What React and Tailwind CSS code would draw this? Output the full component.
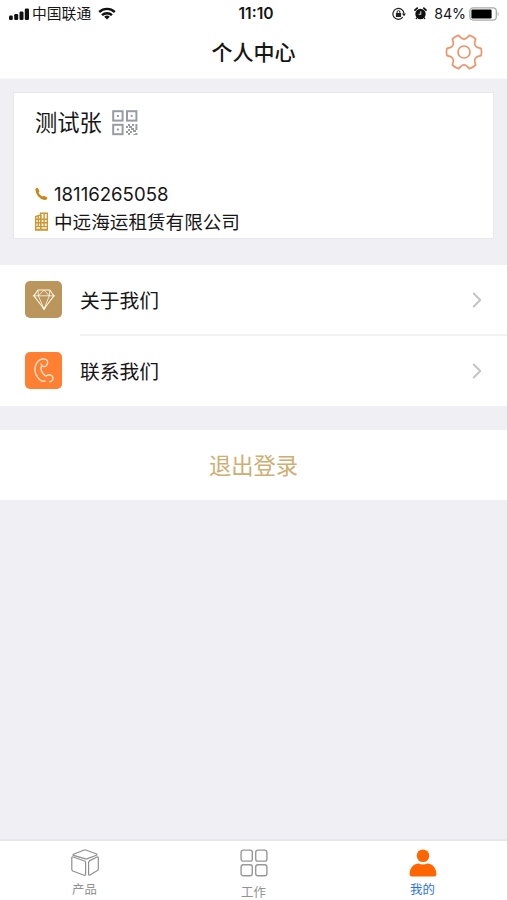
import { ChevronRight } from 'lucide-react'

function SignalIcon() {
  return (
    <svg width="21" height="12" viewBox="0 0 21 12" fill="#111">
      <rect x="0" y="7.5" width="3.8" height="4.5" rx="1.2" />
      <rect x="5.2" y="6" width="4" height="6" rx="1.2" />
      <rect x="10.5" y="3.5" width="4" height="8.5" rx="1.2" />
      <rect x="15.8" y="0.5" width="4.2" height="11.5" rx="1.2" />
    </svg>
  )
}

function WifiIcon() {
  return (
    <svg width="18" height="13" viewBox="0 0 18 13" fill="none" stroke="#111" strokeWidth="2.4">
      <path d="M1.2 5 A11.4 11.4 0 0 1 16.8 5" />
      <path d="M4 8.2 A7.3 7.3 0 0 1 14 8.2" />
      <path d="M6.2 9.7 A4.1 4.1 0 0 1 11.8 9.7 L9 12.5 Z" fill="#111" stroke="none" />
    </svg>
  )
}

function RotationLockIcon() {
  return (
    <svg width="14" height="14" viewBox="0 0 14 14" fill="none" stroke="#222" strokeWidth="1.2">
      <path d="M10.8 10.2 A5.5 5.5 0 1 1 11.9 6.5" />
      <path d="M9.9 6.5 H14 L12 9.2 Z" fill="#222" stroke="none" />
      <rect x="3.9" y="6" width="5.2" height="3.9" rx="0.5" fill="#222" stroke="none" />
      <path d="M5.1 6.4 V5 A1.4 1.4 0 0 1 7.9 5 V6.4" strokeWidth="1" />
    </svg>
  )
}

function AlarmIcon() {
  return (
    <svg width="13" height="13" viewBox="0 0 13 13" fill="none">
      <circle cx="6.5" cy="7" r="5.2" fill="#111" />
      <path d="M1 3.2 L3.2 1.2 M12 3.2 L9.8 1.2" stroke="#111" strokeWidth="1.8" strokeLinecap="round" />
      <path d="M2.9 10.6 L2 12 M10.1 10.6 L11 12" stroke="#111" strokeWidth="1.3" />
      <path d="M6.8 4.2 V7.3 H4.6" stroke="#fff" strokeWidth="0.9" />
    </svg>
  )
}

function BatteryIcon() {
  return (
    <svg width="31" height="14" viewBox="0 0 31 14">
      <rect x="0.9" y="0.9" width="26.4" height="12.2" rx="3.3" fill="none" stroke="#aaa" strokeWidth="1.3" />
      <rect x="2.4" y="2.5" width="20.2" height="9" rx="1.2" fill="#000" />
      <path d="M28.7 4.8 Q30.7 7 28.7 9.2 Z" fill="#aaa" />
    </svg>
  )
}

function GearIcon() {
  return (
    <svg width="40" height="40" viewBox="-20 -20 40 40" fill="none" stroke="#f09468" strokeWidth="1.7" strokeLinejoin="round">
      {[0, 60, 120, 180, 240, 300].map((angle) => (
        <path
          key={angle}
          transform={`rotate(${angle})`}
          d="M11.2 -6.47 Q12.2 -5 14 -4.4 L17 -3.7 Q18.2 0 17 3.7 L14 4.4 Q12.2 5 11.2 6.47"
        />
      ))}
      <circle r="6" />
    </svg>
  )
}

function QrIcon() {
  return (
    <svg width="26" height="26" viewBox="0 0 26 26" fill="none" stroke="#989ba4" strokeWidth="2">
      <rect x="1.2" y="1.2" width="9.4" height="9.4" />
      <rect x="15" y="1.2" width="9.4" height="9.4" />
      <rect x="1.2" y="14.8" width="9.4" height="9.4" />
      <g fill="#989ba4" stroke="none">
        <rect x="4.9" y="4.9" width="2" height="2" />
        <rect x="18.7" y="4.9" width="2" height="2" />
        <rect x="4.9" y="18.5" width="2" height="2" />
        <path d="M16 14h2v2h2v2h2v2h2v2h-3v-2h-2v-2h-2v-2h-1z M14 16h2v2h-2z M20 14h2v2h-2z M23.4 14h2v6h-2z M16 19h2v2h-2z M14 21h2v2h-2z M18 21h2v2h-2v2h-2v-2h2z M23.4 23h2v2h-4v-1h2z" />
      </g>
    </svg>
  )
}

function SmallPhoneIcon() {
  return (
    <svg width="13" height="14" viewBox="0 0 13 14" fill="#c98a1c">
      <path d="M0.3 2.4 Q0.6 1 2.1 0.8 Q2.8 0.8 3.3 1.8 L4.4 4 Q4.6 4.9 3.6 5.4 Q4.5 8.2 7.8 9.6 Q8.5 8.6 9.4 8.9 L12 10.3 Q12.7 10.9 12.2 11.8 Q11.3 13.2 9.4 13 Q1.2 11 0.3 2.4 Z" />
    </svg>
  )
}

function BuildingIcon() {
  return (
    <svg width="13" height="19" viewBox="0 0 13 19" fill="none" stroke="#d0962f" strokeWidth="1.4">
      <path d="M0.7 18 V4.5 L5.6 3 V1.2 H12.3 V18 Z" />
      <path d="M5.8 3 V18" strokeWidth="1.7" />
      <path d="M3.3 4 V15 M9.1 1.5 V15 M0.7 7.2 H12 M0.7 10.8 H12 M0.7 14.6 H12" />
      <path d="M0.7 17.4 H12.3" />
    </svg>
  )
}

function DiamondIcon() {
  return (
    <svg width="22" height="21" viewBox="0 0 22 21" fill="none" stroke="#fff7e8" strokeWidth="1.1" strokeLinejoin="round">
      <path d="M5 1 H16.8 L20.8 6.8 L11 20 L1 6.8 Z" />
      <path d="M1 6.8 H20.8 M5.4 6.8 L11 1 L16.3 6.8 L11 20 Z M5 1 L5.4 6.8 M16.8 1 L16.3 6.8" strokeWidth="0.8" />
      <g fill="#fff" stroke="none">
        <circle cx="1.2" cy="6.8" r="1" />
        <circle cx="20.7" cy="6.8" r="1" />
        <circle cx="11" cy="19.5" r="1.2" />
      </g>
    </svg>
  )
}

function HandsetIcon() {
  return (
    <svg width="20" height="25" viewBox="0 0 20 25" fill="none" stroke="#ffe3cf" strokeWidth="1.4" strokeLinecap="round">
      <path d="M11 23 Q8.5 24 5.5 21.5 Q-1.5 14 2.2 6 Q5 0.9 9.8 0.9 Q13.8 1.3 13.6 5 Q13 8.6 9.8 8.6 Q7.6 8.4 7.2 6" />
      <path d="M7.4 8.4 Q5.8 12.5 11 17.6 Q11.8 18.4 12.8 17.6 Q16 15.6 18.4 18.4 Q20.2 22.4 15.8 23.8" />
    </svg>
  )
}

function BoxIcon() {
  return (
    <svg width="28" height="28" viewBox="0 0 28 28" fill="none" stroke="#8f8f8f" strokeWidth="1.2" strokeLinejoin="round">
      <path d="M2.4 5.2 L12.6 1.2 Q14 0.8 15.4 1.2 L25.6 5 Q26.4 5.6 25.4 6.2 L16.4 9.6 Q15 10 13.6 9.6 L2.6 6.4 Q1.4 5.8 2.4 5.2 Z" />
      <path d="M2.2 8 Q0.8 7.6 0.8 9 V20.5 Q0.9 21.6 1.8 22 L13 26.2 Q14.6 26.6 14.6 25.4 V13.6 Q14.6 12.4 13.6 12 Z" />
      <path d="M26 8 Q27.3 7.6 27.3 8.8 V20 Q27.3 21 26.4 21.6 L18.9 26 Q17.6 26.5 17.6 25.2 V13.4 Q17.7 12.3 18.4 11.9 Z" />
    </svg>
  )
}

function GridIcon() {
  return (
    <svg width="28" height="28" viewBox="0 0 28 28" fill="none" stroke="#989898" strokeWidth="1.4">
      <rect x="1.1" y="1.1" width="11.2" height="11" rx="2.2" />
      <rect x="15.7" y="1.1" width="11.2" height="11" rx="2.2" />
      <rect x="1.1" y="15.7" width="11.2" height="11" rx="2.2" />
      <rect x="15.7" y="15.7" width="11.2" height="11" rx="2.2" />
    </svg>
  )
}

function PersonIcon() {
  return (
    <svg width="28" height="28" viewBox="0 0 28 28" fill="#ff6600">
      <circle cx="14" cy="6.8" r="6.3" />
      <path d="M0.6 25.5 C0.6 18 5.5 14.5 9.5 14.5 Q14 16.3 18.5 14.5 C22.5 14.5 27.4 18 27.4 25.5 Q27.2 27.4 25.4 27.4 H2.6 Q0.8 27.4 0.6 25.5 Z" />
    </svg>
  )
}

function MenuRow({ icon, label, color }) {
  return (
    <div className="flex h-[69px] items-center pl-[25px] pr-[17px]">
      <div className={`flex h-[37px] w-[37px] items-center justify-center rounded-[5px] ${color}`}>{icon}</div>
      <span className="ml-[18px] flex-1 pt-[3px] text-[19.8px] leading-[30px]">{label}</span>
      <ChevronRight size={26} strokeWidth={1.9} color="#c5c5c7" />
    </div>
  )
}

const tabs = [
  { label: '产品', icon: <BoxIcon />, color: 'text-[#929292]', offset: 'mt-1' },
  { label: '工作', icon: <GridIcon />, color: 'text-[#929292]', offset: 'mt-[7px]' },
  { label: '我的', icon: <PersonIcon />, color: 'text-[#2871e6]', offset: 'mt-1' },
]

export default function App() {
  return (
    <div className="flex h-[900px] w-[507px] flex-col overflow-hidden bg-[#efeff4] font-['Inter','Noto_Sans_CJK_SC',sans-serif] text-[#161616]">
      <header className="h-[79px] border-b border-[#f8f8fa] bg-white">
        <div className="grid h-7 grid-cols-[1fr_auto_1fr] items-center pl-[9px] pr-[7px]">
          <div className="flex items-center">
            <SignalIcon />
            <span className="ml-0.5 mr-[7px] pt-px text-[14.8px] leading-none">中国联通</span>
            <WifiIcon />
          </div>
          <span className="pl-[3px] text-center text-[15.6px] font-semibold leading-none">11:10</span>
          <div className="flex items-center justify-end">
            <RotationLockIcon />
            <span className="ml-2"><AlarmIcon /></span>
            <span className="ml-[7px] mr-[3px] text-[14.2px] leading-none">84%</span>
            <BatteryIcon />
          </div>
        </div>
        <div className="grid h-12 grid-cols-[1fr_auto_1fr] items-center pr-[23px] pl-[23px]">
          <span />
          <h1 className="text-[21px] font-medium leading-none">个人中心</h1>
          <div className="flex justify-end"><GearIcon /></div>
        </div>
      </header>

      <section className="mx-[13px] mt-[13px] h-[147px] border border-[#e8e8ec] bg-white pl-[21px] pt-4">
        <div className="flex h-7 items-center">
          <span className="mr-[10px] text-[22.3px] leading-none">测试张</span>
          <QrIcon />
        </div>
        <div className="mt-[43px] flex h-[28px] items-center">
          <SmallPhoneIcon />
          <span className="ml-1.5 pt-px text-[18.6px] leading-none">18116265058</span>
        </div>
        <div className="flex h-[27px] items-center">
          <BuildingIcon />
          <span className="ml-1.5 pt-px text-[18.6px] leading-none">中远海运租赁有限公司</span>
        </div>
      </section>

      <section className="mt-[26px] h-[141px] bg-white">
        <MenuRow label="关于我们" color="bg-[#ba955c]" icon={<DiamondIcon />} />
        <div className="ml-20 h-0.5 bg-[#f3f3f5]" />
        <MenuRow label="联系我们" color="bg-[#ff8033]" icon={<HandsetIcon />} />
      </section>

      <button className="mt-6 h-[70px] bg-white pt-px text-[22.3px] text-[#cfae74]">退出登录</button>

      <nav className="mt-auto grid h-[61px] grid-cols-3 border-t-2 border-[#e5e5eb] bg-white">
        {tabs.map((tab) => (
          <div key={tab.label} className="flex flex-col items-center pt-2">
            {tab.icon}
            <span className={`text-[12.4px] leading-[18px] ${tab.offset} ${tab.color}`}>{tab.label}</span>
          </div>
        ))}
      </nav>
    </div>
  )
}
